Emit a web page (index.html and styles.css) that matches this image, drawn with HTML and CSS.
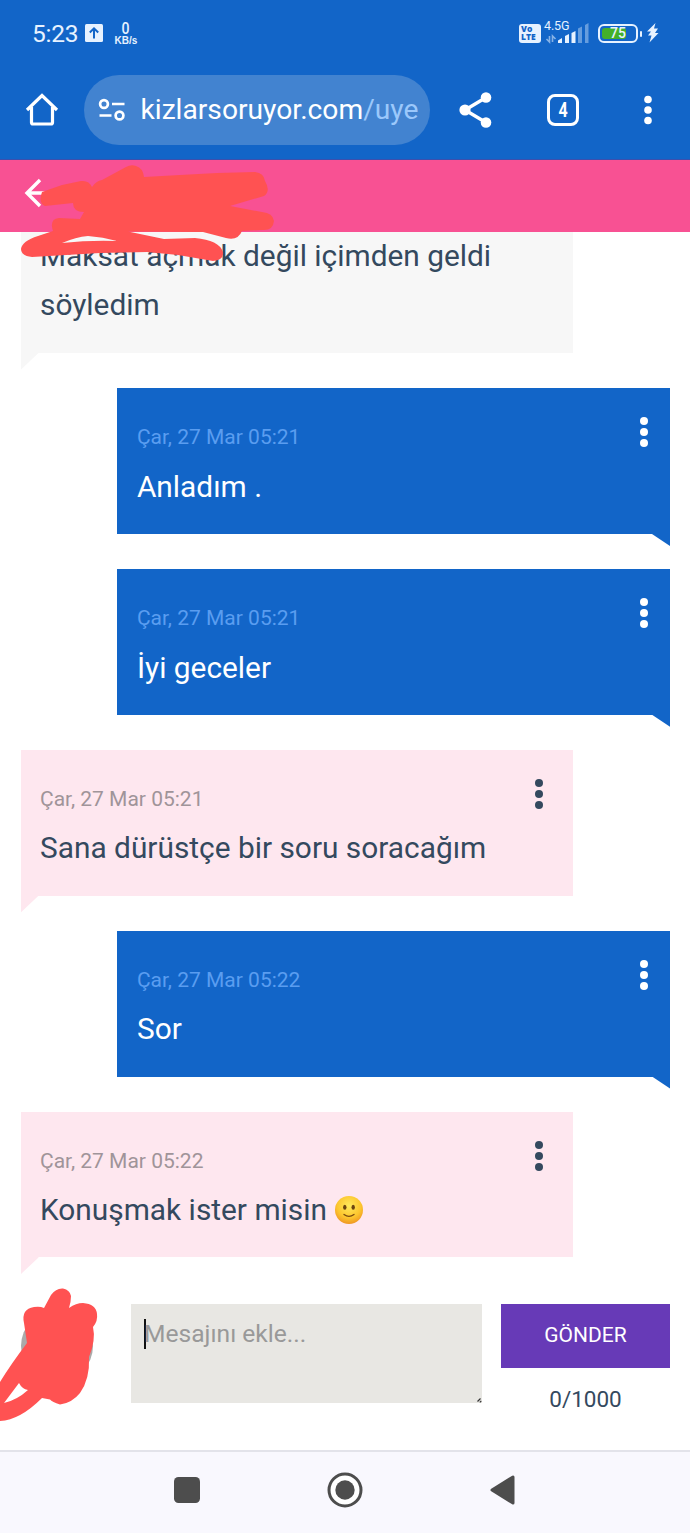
FILE: index.html
```html
<!DOCTYPE html>
<html lang="tr">
<head>
<meta charset="utf-8">
<title>Mesajlar</title>
<link rel="stylesheet" href="styles.css">
</head>
<body>
<div class="phone">
  <div class="statusbar">
    <div class="status-left">
      <span class="clock">5:23</span>
      <svg class="upload" width="18" height="18" viewBox="0 0 18 18"><rect width="18" height="18" rx="1.5" fill="#e7f2ff"/><path d="M9 14.500V4.500M4.800 8.500 9 4.300l4.200 4.200" fill="none" stroke="#1265c8" stroke-width="2"/></svg>
      <span class="speed"><b>0</b><small>KB/s</small></span>
    </div>
    <div class="status-right">
      <span class="volte"><span>Vo</span><span>LTE</span></span>
      <span class="network">
        <span class="gen">4.5G</span>
        <svg width="45" height="21" viewBox="0 0 45 21"><g fill="#e7f2ff"><path d="M14 20v-2.500l4-2.500v5zM21 20v-7l4-2v9zM27.500 20V10l4-2v12z"/><path d="M34 20V5.500l4-2V20zM41 20V2l3.500-2v20z" opacity=".4"/></g><path d="M5.500 13v6l-3-3M8.500 19v-6l3 3" fill="none" stroke="#e7f2ff" stroke-width="1.600" opacity=".55"/></svg>
      </span>
      <span class="battery"><span class="charge"></span><span class="level">75</span></span>
      <svg class="bolt" width="12" height="20" viewBox="0 0 12 20"><path d="M8.500 0 0 8.500h4L1 12.500h3.500L2.500 19.500 11.500 10H8l3-4.500H7z" fill="#e7f2ff"/></svg>
    </div>
  </div>
  <div class="toolbar">
    <svg class="home" width="34" height="34" viewBox="0 0 34 34"><path d="M2 17 17 2.500 32 17M6.500 14v15.500q0 1.500 1.500 1.500h18q1.500 0 1.500-1.500V14" fill="none" stroke="#fff" stroke-width="3.200"/></svg>
    <div class="omnibox">
      <svg width="28" height="24" viewBox="0 0 28 24"><g fill="none" stroke="#fff" stroke-width="2.700"><circle cx="6" cy="6" r="3.900"/><path d="M14 6h12.500M1.500 17.500h12"/><circle cx="21.500" cy="17.500" r="3.900"/></g></svg>
      <span class="url">kizlarsoruyor.com<i>/uye</i></span>
    </div>
    <svg class="share" width="34" height="36" viewBox="0 0 34 36"><path d="M27 5.500 6 18 27 30.500" fill="none" stroke="#fff" stroke-width="3.400"/><g fill="#fff"><circle cx="27" cy="5.500" r="5.300"/><circle cx="6" cy="18" r="5.600"/><circle cx="27" cy="30.500" r="5.300"/></g></svg>
    <span class="tabs"><span>4</span></span>
    <svg class="menu" width="8" height="30" viewBox="0 0 8 30"><g fill="#fff"><circle cx="4" cy="4.500" r="3.800"/><circle cx="4" cy="15" r="3.800"/><circle cx="4" cy="25.500" r="3.800"/></g></svg>
  </div>
  <header class="chat-head">
    <svg width="22" height="30" viewBox="0 0 22 30"><path d="M16 2 3 15l13 13M3 15h19" fill="none" stroke="#fff" stroke-width="3.400"/></svg>
  </header>
  <main class="thread">
    <article class="msg received old">
      <p>Maksat açmak değil içimden geldi<br>söyledim</p>
    </article>
    <article class="msg sent">
      <time>Çar, 27 Mar 05:21</time><p>Anladım .</p>
      <span class="dots"><i></i><i></i><i></i></span>
    </article>
    <article class="msg sent">
      <time>Çar, 27 Mar 05:21</time><p>İyi geceler</p>
      <span class="dots"><i></i><i></i><i></i></span>
    </article>
    <article class="msg received">
      <time>Çar, 27 Mar 05:21</time><p>Sana dürüstçe bir soru soracağım</p>
      <span class="dots"><i></i><i></i><i></i></span>
    </article>
    <article class="msg sent">
      <time>Çar, 27 Mar 05:22</time><p>Sor</p>
      <span class="dots"><i></i><i></i><i></i></span>
    </article>
    <article class="msg received">
      <time>Çar, 27 Mar 05:22</time>
      <p>Konuşmak ister misin <svg class="smile" width="28" height="28" viewBox="0 0 28 28"><defs><radialGradient id="face" cx=".5" cy=".35" r=".65"><stop offset="0" stop-color="#ffe95c"/><stop offset=".65" stop-color="#fcc62e"/><stop offset="1" stop-color="#ef9722"/></radialGradient></defs><circle cx="14" cy="14" r="14" fill="url(#face)"/><ellipse cx="9.800" cy="11.200" rx="1.700" ry="2.500" fill="#6b4410"/><ellipse cx="18.200" cy="11.200" rx="1.700" ry="2.500" fill="#6b4410"/><path d="M9 18.500q5 3.800 10 0" fill="none" stroke="#7a4a10" stroke-width="1.300" stroke-linecap="round"/></svg></p>
      <span class="dots"><i></i><i></i><i></i></span>
    </article>
  </main>
  <footer class="composer">
    <div class="avatar"></div>
    <div class="field"><span>Mesajını ekle...</span><svg class="grip" width="5" height="5" viewBox="0 0 5 5"><path d="M.5 3.500 3.500.5M2.800 4.300l1.500-1.500" stroke="#333" stroke-width="1.200"/></svg></div>
    <div class="send"><span class="button">GÖNDER</span><span class="count">0/1000</span></div>
  </footer>
  <nav class="navbar">
    <svg width="26" height="26" viewBox="0 0 26 26"><rect width="26" height="26" rx="4.500" fill="#4d4d4d"/></svg>
    <svg width="36" height="36" viewBox="0 0 36 36"><circle cx="18" cy="18" r="16" fill="#fff" stroke="#4d4d4d" stroke-width="3"/><circle cx="18" cy="18" r="9.700" fill="#4d4d4d"/></svg>
    <svg width="25" height="30" viewBox="0 0 25 30"><path d="M23 2v26L2 15z" fill="#4d4d4d" stroke="#4d4d4d" stroke-width="3" stroke-linejoin="round"/></svg>
  </nav>
  <svg class="marker" width="690" height="1533" viewBox="0 0 690 1533" fill="#ff5252">
    <path d="M42 192 L62 185L81 181Q89 180 92 187Q96 181 102 180L126 167Q131 164 136 166Q143 168 144 177L180 175L217 173L255 172Q264 173 265 181Q271 191 264 196L230 206L262 212Q273 213 274 221Q273 231 262 230L242 231Q238 241 226 238L203 232L128 231.500L164 239L195 238Q219 240 223 252Q224 260 213 261L178 255L147 252L100 253L32 257Q21 256 21 249Q22 241 38 236L53 231Q49 219 59 218L80 219L84 212Q73 212 73 203L45 206Q38 203 42 192Z"/>
    <path d="M62 243Q76 237 88 236Q103 237 117 241Q90 240 62 243Z" fill="#f7f7f7"/>
    <path fill-rule="evenodd" d="M24 1323Q21 1309 34 1307Q40 1306 44 1308L51 1295Q56 1288 63 1288.500Q70 1290 71 1296Q71 1302 69 1308Q76 1303 83 1303Q96 1304 97 1314Q98 1321 93 1327Q96 1340 89 1357Q90 1379 80 1393Q72 1403 60 1404.500Q52 1402 50 1399.500L42 1398Q20 1420 0 1421V1382Q11 1364 27 1343ZM4 1403L19 1383Q22 1389 28 1390Q17 1400 4 1403Z"/>
  </svg>
</div>
</body>
</html>
```
FILE: styles.css
```css
* { box-sizing: border-box; }
body { margin: 0; background: #fff; font-family: Roboto, sans-serif; color: #34495e; }
.phone { position: relative; width: 690px; height: 1533px; overflow: hidden; display: flex; flex-direction: column; }
p { margin: 0; }
svg { display: block; flex: none; }

.statusbar { height: 66px; flex: none; background: #1265c8; color: #e7f2ff; display: flex; justify-content: space-between; padding: 0 31px 0 32px; }
.status-left, .status-right { display: flex; align-items: center; }
.clock { font-size: 24.5px; width: 53px; letter-spacing: -.2px; }
.speed { margin-left: 10px; width: 26px; display: flex; flex-direction: column; align-items: center; }
.speed b { font: 500 16px/15px Roboto, sans-serif; transform: scaleX(.88); }
.speed small { font: bold 10px/10px "Liberation Sans", sans-serif; }
.volte { width: 22px; height: 19px; border-radius: 3px; background: #e7f2ff; color: #1265c8; font: 800 8.5px/8px "Open Sans", sans-serif; padding: 1.5px 2px; display: flex; flex-direction: column; }
.network { position: relative; width: 45px; height: 21px; margin-left: 3px; }
.gen { position: absolute; left: 0; top: -4px; font-size: 12.5px; line-height: 14px; letter-spacing: -.1px; }
.battery { position: relative; width: 40px; height: 19px; margin-left: 9px; border: 2px solid #e7f2ff; border-radius: 6px; display: flex; align-items: center; justify-content: center; }
.battery::after { content: ""; position: absolute; right: -6px; top: 5px; width: 2.5px; height: 6px; border-radius: 2px; background: #e7f2ff; }
.charge { position: absolute; left: 2px; top: 2px; bottom: 2px; width: 24px; border-radius: 3px; background: #43b02a; }
.level { position: relative; font-size: 14px; font-weight: 500; line-height: 15px; }
.bolt { margin-left: 9px; }

.toolbar { height: 94px; flex: none; background: #1265c8; border-bottom: 1px solid #3c4fae; display: flex; align-items: center; padding: 0 38px 6px 25px; }
.omnibox { width: 346px; height: 70px; margin-left: 25px; border-radius: 35px; background: #4283d0; display: flex; align-items: center; padding: 0 12px 0 14px; gap: 14.5px; }
.url { flex: 1; overflow: hidden; white-space: nowrap; color: #fff; font-size: 28.2px; line-height: 40px; }
.url i { font-style: normal; color: #9bc8fb; }
.share { margin-left: 29px; }
.tabs { width: 32px; height: 32px; margin-left: 54px; border: 3px solid #fff; border-radius: 8px; color: #fff; text-align: center; font: bold 20px/26px Roboto, sans-serif; }
.tabs span { display: block; transform: scaleX(.8); }
.menu { margin-left: auto; }

.chat-head { height: 72px; flex: none; background: #f85193; padding: 18px 0 0 24px; }

.thread { height: 1042px; flex: none; padding: 0 20px 0 20.5px; display: flex; flex-direction: column; gap: 35.4px; }
.msg { position: relative; width: 552.6px; height: 145.5px; flex: none; padding: 25.1px 20px 0 19.5px; }
.msg time { display: block; font-size: 21px; line-height: 49px; color: #a09499; }
.msg p { font-size: 29.85px; line-height: 49px; white-space: nowrap; margin-top: -.8px; }
.received { background: #fee7ef; }
.received::after { content: ""; position: absolute; left: 0; top: calc(100% - 1px); width: 18px; height: 18px; background: inherit; clip-path: polygon(0 0, 100% 0, 100% 1px, 0 100%); }
.sent { align-self: flex-end; background: #1265c8; color: #fff; }
.sent time { color: #5a9df0; }
.sent::after { content: ""; position: absolute; right: 0; top: calc(100% - 1px); width: 18px; height: 13px; background: inherit; clip-path: polygon(0 0, 100% 0, 100% 100%, 0 1px); }
.old { height: 121px; padding-top: 0; background: #f7f7f7; }
.dots { position: absolute; top: 29px; right: 22px; display: flex; flex-direction: column; gap: 3px; }
.received .dots { right: 30px; }
.dots i { width: 8px; height: 8px; border-radius: 50%; background: currentColor; }
.smile { display: inline-block; vertical-align: -4px; margin-left: 1px; }

.composer { height: 176px; flex: none; display: flex; align-items: flex-start; padding: 30px 20px 0 21px; }
.avatar { width: 72px; height: 72px; border-radius: 50%; background: #aaa; margin-top: 6px; }
.field { position: relative; width: 351px; height: 99px; margin-left: 38px; padding: 15px 13px; background: #e8e7e3; color: #999; font-size: 24.6px; line-height: 30px; }
.field span { display: block; border-left: 2px solid #111; text-indent: -2px; }
.grip { position: absolute; right: 0; bottom: 0; }
.send { width: 169px; margin-left: 19px; text-align: center; display: flex; flex-direction: column; }
.button { height: 64px; background: #673ab7; color: #fff; font-size: 21px; line-height: 62px; }
.count { font-size: 22.5px; line-height: 30px; margin-top: 16px; }

.navbar { height: 83px; flex: none; background: #f9f8fe; border-top: 2px solid #e3e3ea; display: flex; justify-content: space-between; align-items: center; padding: 0 175px 6px 174px; }
.marker { position: absolute; left: 0; top: 0; pointer-events: none; }
```
